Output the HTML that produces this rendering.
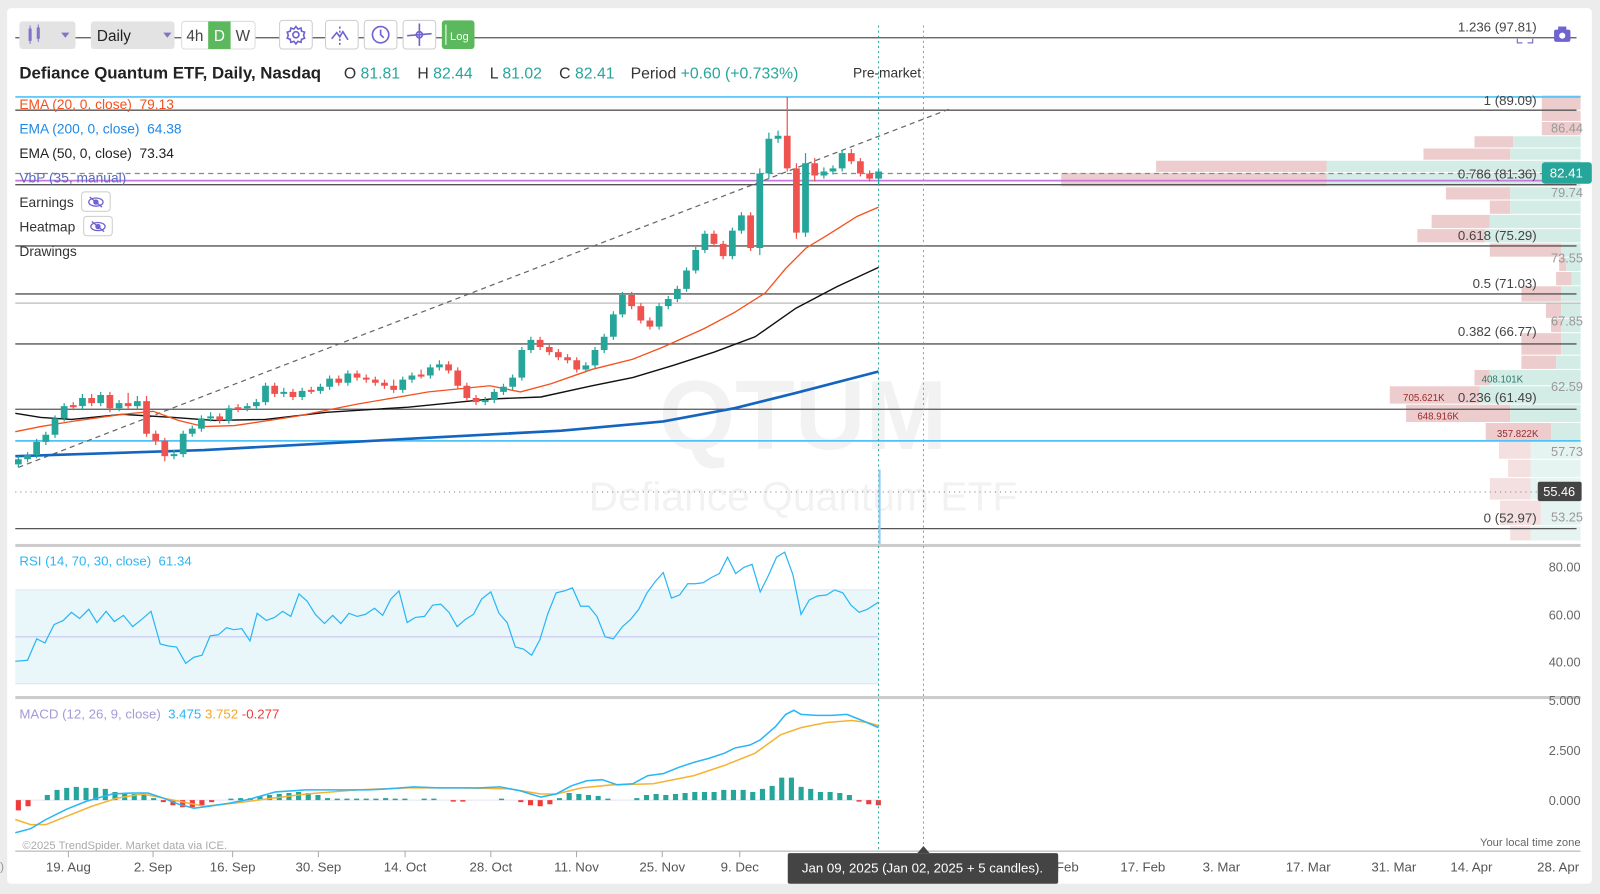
<!DOCTYPE html>
<html><head><meta charset="utf-8">
<style>
html,body{margin:0;padding:0;background:#ececec;}
svg{display:block;font-family:"Liberation Sans",sans-serif;}
</style></head>
<body>
<svg width="1600" height="894" viewBox="0 0 1568 876" preserveAspectRatio="none" xmlns="http://www.w3.org/2000/svg">
<rect x="0" y="0" width="1568" height="876" fill="#ececec"/>
<rect x="7" y="8" width="1553" height="858" rx="4" fill="#fff"/>

<text x="787" y="440" font-size="96" font-weight="bold" fill="#000" fill-opacity="0.05" text-anchor="middle">QTUM</text>
<text x="787" y="500" font-size="40" fill="#000" fill-opacity="0.05" text-anchor="middle">Defiance Quantum ETF</text>

<!-- volume profile -->
<g fill="#eccccc">
<rect x="1511" y="93.5" width="38" height="14"/><rect x="1511" y="108.5" width="38" height="10"/><rect x="1511" y="119.5" width="38" height="13"/>
<rect x="1445" y="133.5" width="38" height="11"/><rect x="1395" y="145.5" width="85" height="11"/><rect x="1133" y="157.5" width="167" height="11"/>
<rect x="1040" y="169.5" width="260" height="13"/><rect x="1417" y="183.5" width="63" height="12"/><rect x="1460" y="196.5" width="20" height="13"/>
<rect x="1403" y="210.5" width="57" height="13"/><rect x="1389" y="224.5" width="66" height="13"/><rect x="1460" y="238.5" width="70" height="13"/>
<rect x="1528" y="252.5" width="7" height="13"/><rect x="1525" y="266.5" width="15" height="13"/><rect x="1491" y="280.5" width="39" height="15"/>
<rect x="1515" y="296.5" width="15" height="15"/><rect x="1520" y="312.5" width="10" height="13"/><rect x="1491" y="326.5" width="39" height="21"/>
<rect x="1491" y="348.5" width="34" height="13"/><rect x="1445" y="362.5" width="15" height="15"/><rect x="1362" y="378.5" width="88" height="17"/>
<rect x="1378" y="396.5" width="102" height="17"/><rect x="1456" y="414.5" width="64" height="17"/>
<g fill-opacity="0.6"><rect x="1469" y="432.5" width="31" height="17"/><rect x="1478" y="450.5" width="22" height="17"/><rect x="1460" y="468.5" width="40" height="21"/><rect x="1470" y="490.5" width="40" height="24"/><rect x="1480" y="515.5" width="20" height="14"/></g>
</g>
<g fill="#d3ece6">
<rect x="1483" y="133.5" width="66" height="11"/><rect x="1480" y="145.5" width="69" height="11"/><rect x="1300" y="157.5" width="249" height="11"/>
<rect x="1300" y="169.5" width="249" height="13"/><rect x="1480" y="183.5" width="69" height="12"/><rect x="1480" y="196.5" width="69" height="13"/>
<rect x="1460" y="210.5" width="89" height="13"/><rect x="1455" y="224.5" width="94" height="13"/><rect x="1530" y="238.5" width="19" height="13"/>
<rect x="1535" y="252.5" width="14" height="13"/><rect x="1540" y="266.5" width="9" height="13"/><rect x="1530" y="280.5" width="19" height="15"/>
<rect x="1530" y="296.5" width="19" height="15"/><rect x="1530" y="312.5" width="19" height="13"/><rect x="1530" y="326.5" width="19" height="21"/>
<rect x="1525" y="348.5" width="24" height="13"/><rect x="1460" y="362.5" width="89" height="15"/><rect x="1450" y="378.5" width="99" height="17"/>
<rect x="1480" y="396.5" width="69" height="17"/><rect x="1520" y="414.5" width="29" height="17"/>
<g fill-opacity="0.6"><rect x="1500" y="432.5" width="49" height="17"/><rect x="1500" y="450.5" width="49" height="17"/><rect x="1500" y="468.5" width="49" height="21"/><rect x="1510" y="490.5" width="39" height="24"/><rect x="1500" y="515.5" width="49" height="14"/></g>
</g>

<g stroke-width="1.3">
<line x1="15" y1="37" x2="1545" y2="37" stroke="#555"/>
<line x1="15" y1="95" x2="1549" y2="95" stroke="#4fc3f7" stroke-width="1.6"/>
<line x1="15" y1="108" x2="1545" y2="108" stroke="#555"/>
<line x1="15" y1="170" x2="1549" y2="170" stroke="#888" stroke-dasharray="5,4"/>
<line x1="15" y1="177" x2="1549" y2="177" stroke="#c678dd" stroke-width="1.8"/>
<line x1="15" y1="181" x2="1545" y2="181" stroke="#555"/>
<line x1="15" y1="241" x2="1545" y2="241" stroke="#555"/>
<line x1="15" y1="288" x2="1545" y2="288" stroke="#555"/>
<line x1="15" y1="297" x2="1549" y2="297" stroke="#bbb"/>
<line x1="15" y1="337" x2="1545" y2="337" stroke="#555"/>
<line x1="15" y1="401" x2="1545" y2="401" stroke="#555"/>
<line x1="15" y1="432" x2="1549" y2="432" stroke="#4fc3f7" stroke-width="1.6"/>
<line x1="15" y1="482" x2="1549" y2="482" stroke="#999" stroke-dasharray="1,4"/>
<line x1="15" y1="518" x2="1545" y2="518" stroke="#555"/>
</g>
<line x1="18" y1="458" x2="930" y2="107" stroke="#666" stroke-width="1.2" stroke-dasharray="5,4"/>

<g font-size="13" fill="#444" text-anchor="end">
<text x="1506" y="31">1.236 (97.81)</text>
<text x="1506" y="103">1 (89.09)</text>
<text x="1506" y="175">0.786 (81.36)</text>
<text x="1506" y="235">0.618 (75.29)</text>
<text x="1506" y="282">0.5 (71.03)</text>
<text x="1506" y="329">0.382 (66.77)</text>
<text x="1506" y="394">0.236 (61.49)</text>
<text x="1506" y="512">0 (52.97)</text>
</g>
<g font-size="9.5">
<text x="1452" y="375" fill="#2a7a6a">408.101K</text>
<text x="1375" y="393" fill="#9b2a2a">705.621K</text>
<text x="1389" y="411" fill="#9b2a2a">648.916K</text>
<text x="1467" y="428" fill="#9b2a2a">357.822K</text>
</g>
<g font-size="12.5" fill="#999">
<text x="1520" y="130">86.44</text>
<text x="1520" y="193">79.74</text>
<text x="1520" y="257">73.55</text>
<text x="1520" y="319">67.85</text>
<text x="1520" y="383">62.59</text>
<text x="1520" y="447">57.73</text>
<text x="1520" y="511">53.25</text>
</g>
<rect x="1511" y="159" width="49" height="21" rx="3" fill="#26a69a"/>
<text x="1535" y="174" font-size="13" fill="#fff" text-anchor="middle">82.41</text>
<rect x="1507" y="472" width="43" height="19" rx="2" fill="#444"/>
<text x="1528" y="486" font-size="12.5" fill="#fff" text-anchor="middle">55.46</text>

<!-- EMAs -->
<polyline fill="none" stroke="#1565c0" stroke-width="2.6" points="15,447 200,441 400,430 550,422 650,413 720,400 780,385 861,364"/>
<polyline fill="none" stroke="#111" stroke-width="1.4" points="15,405 40,409 70,411 120,406 170,409 210,412 260,411 320,404 400,399 480,391 530,389 580,378 620,370 660,358 700,345 740,330 780,302 820,281 861,262"/>
<polyline fill="none" stroke="#f4511e" stroke-width="1.3" points="15,423 40,418 70,413 120,406 150,403 175,412 200,418 230,417 290,408 350,396 420,384 480,378 510,384 540,376 580,362 620,352 650,340 690,322 720,306 750,287 770,263 790,243 810,231 840,212 861,203"/>

<!-- candles -->
<path stroke="#26a69a" stroke-width="1.2" fill="none" d="M18,447V458 M27,443V453 M35.9,430V449 M44.9,423V436 M53.9,407V429 M62.9,395V413 M80.8,386V401 M98.7,384V398 M116.7,392V403 M134.6,388V401 M170.5,441V450 M179.5,422V448 M188.4,417V428 M197.4,407V423 M206.4,404V413 M224.3,397V415 M242.3,395V403 M251.2,391V401 M260.2,375V397 M278.1,380V389 M296.1,380V392 M314,376V386 M323,368V382 M340.9,363V378 M394.7,369V385 M403.7,365V375 M421.7,357V371 M430.6,353V363 M475.5,389V397 M484.4,381V395 M493.4,376V387 M502.4,367V382 M511.4,340V373 M520.3,330V346 M574.1,355V365 M583.1,340V361 M592.1,327V346 M601.1,305V333 M610,286V311 M645.9,297V323 M654.9,290V303 M663.8,280V296 M672.8,262V286 M681.8,242V268 M690.8,226V248 M717.7,223V254 M726.6,208V229 M744.6,165V250 M753.5,130V175 M762.5,128V140 M789.4,150V232 M807.4,164V175 M816.3,162V171 M825.3,147V168 M861,165V182"/>
<path stroke="#ef5350" stroke-width="1.2" fill="none" d="M71.8,394V402 M89.8,386V398 M107.7,384V404 M125.6,385V401 M143.6,388V428 M152.6,422V436 M161.5,429V452 M215.3,405V415 M233.3,396V404 M269.2,375V389 M287.1,381V392 M305,379V386 M332,368V378 M349.9,363V373 M358.9,367V375 M367.8,369V378 M376.8,372V381 M385.8,372V385 M412.7,362V371 M439.6,354V366 M448.6,360V381 M457.5,375V393 M466.5,387V397 M529.3,330V343 M538.3,337V348 M547.2,342V353 M556.2,347V356 M565.2,350V365 M619,286V303 M628,297V317 M636.9,311V323 M699.7,226V242 M708.7,236V254 M735.6,208V246 M771.5,95V168 M780.5,160V234 M798.4,155V178 M834.3,146V161 M843.2,155V173 M852.2,167V178"/>
<path fill="#26a69a" d="M14.7,450h6.6v5h-6.6z M23.7,446h6.6v4h-6.6z M32.6,433h6.6v13h-6.6z M41.6,426h6.6v7h-6.6z M50.6,410h6.6v16h-6.6z M59.6,398h6.6v12h-6.6z M77.5,390h6.6v8h-6.6z M95.4,387h6.6v8h-6.6z M113.4,395h6.6v5h-6.6z M131.3,393h6.6v5h-6.6z M167.2,445h6.6v2h-6.6z M176.2,425h6.6v20h-6.6z M185.1,420h6.6v5h-6.6z M194.1,410h6.6v10h-6.6z M203.1,408h6.6v2h-6.6z M221,400h6.6v12h-6.6z M239,398h6.6v2h-6.6z M247.9,394h6.6v4h-6.6z M256.9,378h6.6v16h-6.6z M274.8,384h6.6v2h-6.6z M292.8,383h6.6v6h-6.6z M310.7,379h6.6v4h-6.6z M319.7,371h6.6v8h-6.6z M337.6,366h6.6v9h-6.6z M391.4,372h6.6v10h-6.6z M400.4,368h6.6v4h-6.6z M418.4,360h6.6v8h-6.6z M427.3,357h6.6v3h-6.6z M472.2,392h6.6v2h-6.6z M481.1,384h6.6v8h-6.6z M490.1,379h6.6v5h-6.6z M499.1,370h6.6v9h-6.6z M508.1,343h6.6v27h-6.6z M517,333h6.6v10h-6.6z M570.8,358h6.6v4h-6.6z M579.8,343h6.6v15h-6.6z M588.8,330h6.6v13h-6.6z M597.8,308h6.6v22h-6.6z M606.7,289h6.6v19h-6.6z M642.6,300h6.6v20h-6.6z M651.6,293h6.6v7h-6.6z M660.5,283h6.6v10h-6.6z M669.5,265h6.6v18h-6.6z M678.5,245h6.6v20h-6.6z M687.5,229h6.6v16h-6.6z M714.4,226h6.6v25h-6.6z M723.3,211h6.6v15h-6.6z M741.3,170h6.6v73h-6.6z M750.2,136h6.6v34h-6.6z M759.2,133h6.6v3h-6.6z M786.1,160h6.6v68h-6.6z M804.1,168h6.6v4h-6.6z M813,165h6.6v3h-6.6z M822,150h6.6v15h-6.6z M857.7,168h6.6v7h-6.6z"/>
<path fill="#ef5350" d="M68.5,397h6.6v2h-6.6z M86.5,390h6.6v5h-6.6z M104.4,387h6.6v13h-6.6z M122.3,395h6.6v3h-6.6z M140.3,393h6.6v32h-6.6z M149.3,425h6.6v7h-6.6z M158.2,432h6.6v15h-6.6z M212,408h6.6v4h-6.6z M230,399h6.6v2h-6.6z M265.9,378h6.6v8h-6.6z M283.8,384h6.6v5h-6.6z M301.7,382h6.6v2h-6.6z M328.7,371h6.6v4h-6.6z M346.6,366h6.6v4h-6.6z M355.6,370h6.6v2h-6.6z M364.5,372h6.6v3h-6.6z M373.5,375h6.6v3h-6.6z M382.5,378h6.6v4h-6.6z M409.4,367h6.6v2h-6.6z M436.3,357h6.6v6h-6.6z M445.3,363h6.6v15h-6.6z M454.2,378h6.6v12h-6.6z M463.2,390h6.6v4h-6.6z M526,333h6.6v7h-6.6z M535,340h6.6v5h-6.6z M543.9,345h6.6v5h-6.6z M552.9,350h6.6v3h-6.6z M561.9,353h6.6v9h-6.6z M615.7,289h6.6v11h-6.6z M624.7,300h6.6v14h-6.6z M633.6,314h6.6v6h-6.6z M696.4,229h6.6v10h-6.6z M705.4,239h6.6v12h-6.6z M732.3,211h6.6v32h-6.6z M768.2,133h6.6v32h-6.6z M777.2,165h6.6v63h-6.6z M795.1,160h6.6v12h-6.6z M831,150h6.6v8h-6.6z M839.9,158h6.6v12h-6.6z M848.9,170h6.6v5h-6.6z"/>

<rect x="15" y="533" width="1534" height="3" fill="#ccc"/>
<rect x="15" y="682" width="1534" height="3" fill="#ccc"/>

<!-- RSI -->
<rect x="15" y="578" width="846" height="92" fill="#e9f7fa"/>
<line x1="15" y1="578" x2="861" y2="578" stroke="#dde4f5"/>
<line x1="15" y1="670" x2="861" y2="670" stroke="#dde4f5"/>
<line x1="15" y1="624" x2="861" y2="624" stroke="#c9c6ee"/>
<text x="19" y="554" font-size="13" fill="#29b6f6">RSI (14, 70, 30, close)&#160;&#160;61.34</text>
<g font-size="12.5" fill="#666" text-anchor="end"><text x="1549" y="560">80.00</text><text x="1549" y="607">60.00</text><text x="1549" y="653">40.00</text></g>
<polyline fill="none" stroke="#29b6f6" stroke-width="1.2" points="15,648 27,647 36,626 44,630 53,612 62,608 70,600 78,606 87,597 95,610 104,599 112,609 121,603 130,614 140,606 148,599 157,631 165,633 173,634 182,650 190,644 198,642 206,623 214,622 222,615 229,617 237,616 245,628 252,601 261,608 269,605 277,599 285,604 293,582 301,589 309,602 318,611 326,603 334,611 342,601 350,604 358,602 367,596 375,603 383,587 391,579 399,610 407,605 416,604 424,593 432,592 440,600 448,614 456,607 464,602 472,587 481,580 489,601 497,610 505,634 513,636 521,642 529,627 537,601 545,581 553,579 561,576 569,594 577,594 585,604 593,624 601,626 610,614 618,607 626,597 634,581 642,570 650,561 658,586 666,583 674,572 681,572 689,571 697,566 705,562 713,546 721,562 729,556 737,553 745,580 753,564 761,546 769,541 777,563 785,602 793,588 801,584 810,583 818,578 826,581 834,593 842,600 850,597 861,590"/>

<!-- MACD -->
<text x="19" y="704" font-size="13" fill="#a29bd8">MACD (12, 26, 9, close)&#160;<tspan fill="#29b6f6">&#160;3.475</tspan><tspan fill="#f5a623">&#160;3.752</tspan><tspan fill="#ef3b3b">&#160;-0.277</tspan></text>
<g font-size="12.5" fill="#666" text-anchor="end"><text x="1549" y="691">5.000</text><text x="1549" y="740">2.500</text><text x="1549" y="789">0.000</text></g>
<line x1="15" y1="784" x2="861" y2="784" stroke="#e3e3f3"/>
<path fill="#26a69a" d="M43.9,779h5v5h-5z M53.4,774h5v10h-5z M62.9,772h5v12h-5z M72.3,771h5v13h-5z M81.8,772h5v12h-5z M91.3,772h5v12h-5z M100.7,773h5v11h-5z M110.2,776h5v8h-5z M119.7,777h5v7h-5z M129.1,778h5v6h-5z M138.6,779h5v5h-5z M148.1,782h5v2h-5z M223.8,782.5h5v1.5h-5z M233.3,782h5v2h-5z M242.8,782h5v2h-5z M252.3,780h5v4h-5z M261.7,779h5v5h-5z M271.2,778h5v6h-5z M280.7,777h5v7h-5z M290.1,776h5v8h-5z M299.6,777h5v7h-5z M309.1,779h5v5h-5z M318.5,782h5v2h-5z M328,782.5h5v1.5h-5z M337.5,782.5h5v1.5h-5z M347,782.5h5v1.5h-5z M356.4,782.5h5v1.5h-5z M365.9,782.5h5v1.5h-5z M375.4,782h5v2h-5z M384.8,782.5h5v1.5h-5z M394.3,782.5h5v1.5h-5z M413.2,782.5h5v1.5h-5z M422.7,782.5h5v1.5h-5z M489,782.5h5v1.5h-5z M545.8,782h5v2h-5z M555.3,777h5v7h-5z M564.8,778h5v6h-5z M574.2,779h5v5h-5z M583.7,780h5v4h-5z M593.2,782.5h5v1.5h-5z M621.6,782h5v2h-5z M631.1,779h5v5h-5z M640.5,778h5v6h-5z M650,779h5v5h-5z M659.5,778h5v6h-5z M668.9,777h5v7h-5z M678.4,776h5v8h-5z M687.9,776h5v8h-5z M697.3,776h5v8h-5z M706.8,774h5v10h-5z M716.3,774h5v10h-5z M725.8,774h5v10h-5z M735.2,776h5v8h-5z M744.7,773h5v11h-5z M754.2,770h5v14h-5z M763.6,762h5v22h-5z M773.1,762h5v22h-5z M782.6,771h5v13h-5z M792,773h5v11h-5z M801.5,776h5v8h-5z M811,776h5v8h-5z M820.5,777h5v7h-5z M829.9,779h5v5h-5z"/>
<path fill="#ef3b3b" d="M15.5,784h5v10h-5z M25,784h5v6h-5z M157.6,784h5v2h-5z M167,784h5v5h-5z M176.5,784h5v7h-5z M186,784h5v7h-5z M195.4,784h5v5h-5z M204.9,784h5v2h-5z M441.7,784h5v1.5h-5z M451.1,784h5v1.5h-5z M507.9,784h5v2h-5z M517.4,784h5v5h-5z M526.9,784h5v6h-5z M536.4,784h5v4h-5z M839.4,784h5v1.5h-5z M848.9,784h5v4h-5z M858.3,784h5v5h-5z"/>
<polyline fill="none" stroke="#f5b335" stroke-width="1.5" points="15,803 30,808 45,808 65,800 90,790 115,782 140,778 160,782 180,786 200,790 230,787 260,783 300,778 350,774 400,772 450,772 500,773 530,778 545,778 570,772 600,769 640,768 680,760 710,750 740,738 765,720 785,713 810,708 835,706 850,708 861,711"/>
<polyline fill="none" stroke="#29b6f6" stroke-width="1.5" points="15,816 30,812 45,803 65,793 85,785 110,778 130,777 145,777 160,782 175,788 190,792 205,790 225,787 245,783 270,776 300,774 330,774 360,774 380,773 405,771 430,772 470,772 490,771 510,775 530,781 545,778 560,770 575,765 590,764 605,769 620,768 635,760 650,758 665,752 680,747 695,743 710,738 720,733 735,730 745,725 760,712 770,700 778,696 785,700 800,701 815,701 830,700 845,706 861,713"/>

<line x1="15" y1="834" x2="1549" y2="834" stroke="#aaa"/>
<g font-size="13" fill="#555" text-anchor="middle">
<text x="67" y="854">19. Aug</text><text x="150" y="854">2. Sep</text><text x="228" y="854">16. Sep</text><text x="312" y="854">30. Sep</text><text x="397" y="854">14. Oct</text><text x="481" y="854">28. Oct</text><text x="565" y="854">11. Nov</text><text x="649" y="854">25. Nov</text><text x="725" y="854">9. Dec</text><text x="1046" y="854">Feb</text><text x="1120" y="854">17. Feb</text><text x="1197" y="854">3. Mar</text><text x="1282" y="854">17. Mar</text><text x="1366" y="854">31. Mar</text><text x="1442" y="854">14. Apr</text><text x="1527" y="854">28. Apr</text>
</g>
<g stroke="#aaa"><line x1="67" y1="834" x2="67" y2="840"/><line x1="150" y1="834" x2="150" y2="840"/><line x1="228" y1="834" x2="228" y2="840"/><line x1="312" y1="834" x2="312" y2="840"/><line x1="397" y1="834" x2="397" y2="840"/><line x1="481" y1="834" x2="481" y2="840"/><line x1="565" y1="834" x2="565" y2="840"/><line x1="649" y1="834" x2="649" y2="840"/><line x1="725" y1="834" x2="725" y2="840"/></g>
<text x="22" y="832" font-size="11" fill="#aaa">©2025 TrendSpider. Market data via ICE.</text>
<text x="1549" y="829" font-size="11" fill="#666" text-anchor="end">Your local time zone</text>

<line x1="861" y1="25" x2="861" y2="834" stroke="#26a69a" stroke-dasharray="2,3"/>
<line x1="905" y1="25" x2="905" y2="830" stroke="#999" stroke-dasharray="2,3"/>
<line x1="862" y1="460" x2="862" y2="533" stroke="#90caf9" stroke-width="2"/>
<rect x="772" y="836" width="265" height="30" rx="2" fill="#444"/>
<polygon points="899,836 905,829 911,836" fill="#444"/>
<text x="904" y="855" font-size="13" fill="#fff" text-anchor="middle">Jan 09, 2025 (Jan 02, 2025 + 5 candles).</text>
<text x="0" y="853" font-size="12" fill="#999">)</text>

<!-- toolbar -->
<rect x="19" y="21" width="55" height="27" rx="3" fill="#e3e3e3"/>
<rect x="28" y="28" width="3" height="12" fill="#7e74c8"/><line x1="29.5" y1="25" x2="29.5" y2="43" stroke="#7e74c8"/>
<rect x="36" y="27" width="3" height="11" fill="#7e74c8"/><line x1="37.5" y1="24" x2="37.5" y2="41" stroke="#7e74c8"/>
<polygon points="60,32 68,32 64,37" fill="#7e74c8"/>
<rect x="89" y="21" width="82" height="27" rx="3" fill="#e3e3e3"/>
<text x="95" y="40" font-size="15" fill="#222">Daily</text>
<polygon points="160,32 168,32 164,37" fill="#7e74c8"/>
<rect x="178" y="21" width="72" height="27" rx="3" fill="#fff" stroke="#ddd"/>
<rect x="204" y="21" width="22" height="27" fill="#5cb85c"/>
<text x="191" y="40" font-size="15" fill="#444" text-anchor="middle">4h</text>
<text x="215" y="40" font-size="15" fill="#fff" text-anchor="middle">D</text>
<text x="238" y="40" font-size="15" fill="#444" text-anchor="middle">W</text>
<g fill="#fff" stroke="#ccc"><rect x="274" y="20" width="32" height="28" rx="3"/><rect x="319" y="20" width="32" height="28" rx="3"/><rect x="357" y="20" width="32" height="28" rx="3"/><rect x="395" y="20" width="32" height="28" rx="3"/></g>
<g fill="none" stroke="#6f63d0" stroke-width="1.6">
<circle cx="290" cy="34" r="3"/><path d="M290 26 l2 2.5 3-1 0.5 3 3 1-1 3 1 3-3 1-0.5 3-3-1-2 2.5-2-2.5-3 1-0.5-3-3-1 1-3-1-3 3-1 0.5-3 3 1z"/>
<path d="M325 38 l5-6 3 4 3-5 5 8"/><line x1="333" y1="26" x2="333" y2="44" stroke-dasharray="2,2"/>
<circle cx="373" cy="34" r="8"/><path d="M373 29 v5 l3 3"/>
<line x1="399" y1="35" x2="423" y2="33"/><line x1="411" y1="23" x2="411" y2="45"/><circle cx="411" cy="34" r="3"/>
</g>
<rect x="433" y="20" width="32" height="28" rx="3" fill="#5cb85c"/>
<line x1="437" y1="24" x2="437" y2="44" stroke="#fff"/>
<text x="441" y="39" font-size="11" fill="#fff">Log</text>
<rect x="1523" y="29" width="16" height="12" rx="2" fill="#6f63d0"/><rect x="1527" y="26" width="8" height="4" fill="#6f63d0"/><circle cx="1531" cy="35" r="3" fill="#fff"/>
<path d="M1487 38 v4 h5 M1502 38 v4 h-5" fill="none" stroke="#7e74c8" stroke-width="1.2"/>

<text x="19" y="77" font-size="16.5" font-weight="bold" fill="#222">Defiance Quantum ETF, Daily, Nasdaq</text>
<text x="337" y="77" font-size="15.5" fill="#333">O <tspan fill="#26a69a">81.81</tspan></text>
<text x="409" y="77" font-size="15.5" fill="#333">H <tspan fill="#26a69a">82.44</tspan></text>
<text x="480" y="77" font-size="15.5" fill="#333">L <tspan fill="#26a69a">81.02</tspan></text>
<text x="548" y="77" font-size="15.5" fill="#333">C <tspan fill="#26a69a">82.41</tspan></text>
<text x="618" y="77" font-size="15.5" fill="#333">Period <tspan fill="#26a69a">+0.60 (+0.733%)</tspan></text>
<text x="836" y="76" font-size="13.5" fill="#333">Pre-market</text>

<g font-size="13.5">
<text x="19" y="107" fill="#f4511e">EMA (20, 0, close)&#160;&#160;79.13</text>
<text x="19" y="131" fill="#1e88e5">EMA (200, 0, close)&#160;&#160;64.38</text>
<text x="19" y="155" fill="#222">EMA (50, 0, close)&#160;&#160;73.34</text>
<text x="19" y="179" fill="#5c6bc0">VbP (35, manual)</text>
<text x="19" y="203" fill="#333">Earnings</text>
<text x="19" y="227" fill="#333">Heatmap</text>
<text x="19" y="251" fill="#333">Drawings</text>
</g>
<g fill="#fff" stroke="#ccc"><rect x="80" y="188" width="28" height="19" rx="3"/><rect x="82" y="212" width="28" height="19" rx="3"/></g>
<g fill="none" stroke="#6f63d0" stroke-width="1.3">
<ellipse cx="94" cy="198" rx="7" ry="4"/><circle cx="94" cy="198" r="2" fill="#6f63d0"/><line x1="88" y1="193" x2="100" y2="203"/>
<ellipse cx="96" cy="222" rx="7" ry="4"/><circle cx="96" cy="222" r="2" fill="#6f63d0"/><line x1="90" y1="217" x2="102" y2="227"/>
</g>
</svg>
</body></html>
